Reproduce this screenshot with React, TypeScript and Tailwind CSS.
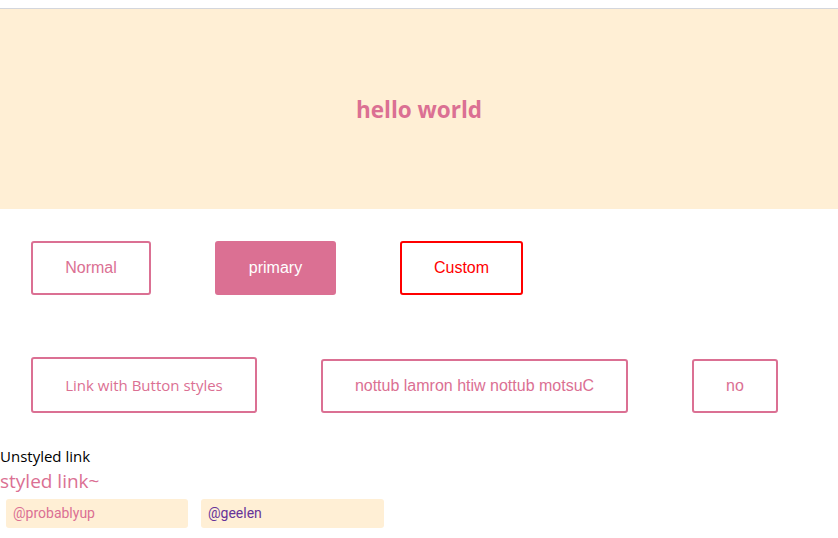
import React from "react";

export default function App() {
  return (
    <div className="w-[838px] h-[538px] bg-white overflow-hidden">
      <div className="h-[8px]" />
      <div className="h-[1px] bg-[#d3d6dc]" />
      <div className="h-[200px] bg-[#ffefd5] flex items-center justify-center">
        <h1 className="text-[22.5px] font-bold text-[#db7093] font-['Open_Sans',sans-serif] leading-none pt-[2px]">hello world</h1>
      </div>
      <div className="flex pl-[31px] pt-[32px] gap-[64px] font-['Liberation_Sans',Arial,sans-serif] text-[16px]">
        <button className="w-[120px] h-[54px] border-2 border-[#db7093] rounded-[3px] text-[#db7093] flex items-center justify-center">Normal</button>
        <button className="w-[121px] h-[54px] border-2 border-[#db7093] bg-[#db7093] rounded-[3px] text-white flex items-center justify-center">primary</button>
        <button className="w-[123px] h-[54px] border-2 border-[#ff0000] rounded-[3px] text-[#ff0000] flex items-center justify-center">Custom</button>
      </div>
      <div className="flex items-end pl-[31px] pt-[62px] gap-[64px] text-[16px]">
        <a className="w-[226px] h-[56px] border-2 border-[#db7093] rounded-[3px] text-[#db7093] flex items-center justify-center font-['Open_Sans',sans-serif] text-[15px]">Link with Button styles</a>
        <button className="w-[307px] h-[54px] border-2 border-[#db7093] rounded-[3px] text-[#db7093] flex items-center justify-center font-['Liberation_Sans',Arial,sans-serif]">nottub lamron htiw nottub motsuC</button>
        <button className="w-[86px] h-[54px] border-2 border-[#db7093] rounded-[3px] text-[#db7093] flex items-center justify-center font-['Liberation_Sans',Arial,sans-serif]">no</button>
      </div>
      <div className="pt-[33px] font-['Open_Sans',sans-serif]">
        <div className="text-[15px] leading-[20px] text-black">Unstyled link</div>
        <div className="text-[19px] leading-[26px] mt-[2px] text-[#db7093]">styled link~</div>
      </div>
      <div className="flex gap-[13px] pl-[6px] pt-[5px] font-['Roboto',sans-serif] text-[14px]">
        <div className="w-[182px] h-[29px] bg-[#ffefd5] rounded-[3px] flex items-center pl-[7px] text-[#db7093]">@probablyup</div>
        <div className="w-[183px] h-[29px] bg-[#ffefd5] rounded-[3px] flex items-center pl-[7px] text-[#663399]">@geelen</div>
      </div>
    </div>
  );
}
